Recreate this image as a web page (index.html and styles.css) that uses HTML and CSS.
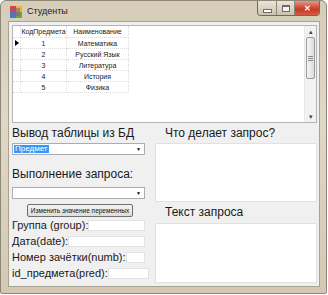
FILE: index.html
```html
<!DOCTYPE html>
<html>
<head>
    <meta charset="UTF-8">
    <title>Студенты</title>
    <link rel="stylesheet" href="styles.css">
</head>
<body>
    <div class="window">
        <div class="titlebar">
            <svg class="app-icon" width="14" height="14" viewBox="0 0 14 14">
                <rect x="1" y="1" width="6" height="6" fill="#d8452b"/>
                <rect x="7" y="1" width="6" height="6" fill="#f0b030"/>
                <rect x="1" y="7" width="6" height="6" fill="#3c7ed0"/>
                <rect x="7" y="7" width="6" height="6" fill="#6aa83a"/>
                <rect x="3" y="3" width="8" height="8" fill="#8a5a9a" opacity="0.6"/>
            </svg>
            <span class="title">Студенты</span>
            <div class="caption-buttons">
                <div class="cap-btn cap-min"><span class="min-glyph"></span></div>
                <div class="cap-btn cap-max"><span class="max-glyph"></span></div>
                <div class="cap-btn cap-close">✕</div>
            </div>
        </div>

        <div class="client">
            <div class="grid">
                <table class="grid-table">
                    <tr class="grid-head">
                        <td class="row-head"></td>
                        <td class="col-kod">КодПредмета</td>
                        <td class="col-name">Наименование</td>
                    </tr>
                    <tr>
                        <td class="row-head"><span class="row-arrow"></span></td>
                        <td>1</td>
                        <td>Математика</td>
                    </tr>
                    <tr>
                        <td class="row-head"></td>
                        <td>2</td>
                        <td>Русский Язык</td>
                    </tr>
                    <tr>
                        <td class="row-head"></td>
                        <td>3</td>
                        <td>Литература</td>
                    </tr>
                    <tr>
                        <td class="row-head"></td>
                        <td>4</td>
                        <td>История</td>
                    </tr>
                    <tr>
                        <td class="row-head"></td>
                        <td>5</td>
                        <td>Физика</td>
                    </tr>
                </table>
                <div class="vscroll">
                    <div class="scroll-arrow">▴</div>
                    <div class="scroll-thumb"><span class="grip"></span></div>
                    <div class="scroll-track"></div>
                    <div class="scroll-arrow">▾</div>
                </div>
            </div>

            <div class="lower">
                <div class="left">
                    <div class="label">Вывод таблицы из БД</div>
                    <div class="combo combo-first">
                        <span class="combo-sel">Предмет</span>
                        <span class="combo-arrow">▼</span>
                    </div>
                    <div class="label label-second">Выполнение запроса:</div>
                    <div class="combo combo-second">
                        <span class="combo-arrow">▼</span>
                    </div>
                    <div class="button">Изменить значение переменных</div>

                    <div class="field">
                        <span>Группа (group):</span>
                        <span class="input input-group"></span>
                    </div>
                    <div class="field">
                        <span>Дата(date):</span>
                        <span class="input input-date"></span>
                    </div>
                    <div class="field">
                        <span>Номер зачётки(numb):</span>
                        <span class="input input-numb"></span>
                    </div>
                    <div class="field">
                        <span>id_предмета(pred):</span>
                        <span class="input input-pred"></span>
                    </div>
                </div>

                <div class="right">
                    <div class="label label-right">Что делает запрос?</div>
                    <div class="memo memo-what"></div>
                    <div class="label label-right label-text">Текст запроса</div>
                    <div class="memo memo-text"></div>
                </div>
            </div>
        </div>
    </div>
</body>
</html>
```

FILE: styles.css
```css
body {
    margin: 0;
    background: #ffffff;
    font-family: "Liberation Sans", Arial, sans-serif;
}

.window {
    width: 327px;
    height: 294px;
    box-sizing: border-box;
    padding: 0 6px 6px 7px;
    border: 1px solid #8d8778;
    border-radius: 6px 6px 2px 2px;
    background: linear-gradient(180deg, #d6cdb8 0%, #e0d8c6 40%, #d3c9b3 100%);
}

.titlebar {
    height: 20px;
    display: flex;
    align-items: center;
}

.app-icon {
    margin-left: 1px;
    margin-top: 1px;
}

.title {
    margin-left: 4px;
    font-size: 9px;
    color: #1a1a1a;
}

.caption-buttons {
    margin-left: auto;
    align-self: flex-start;
    display: flex;
    height: 14px;
    border: 1px solid #6f6a5e;
    border-top: none;
    border-radius: 0 0 4px 4px;
    overflow: hidden;
}

.cap-btn {
    height: 14px;
    display: flex;
    align-items: center;
    justify-content: center;
    background: linear-gradient(180deg, #ebe5d8, #cbc2ad);
    border-right: 1px solid #8e8878;
}

.cap-min {
    width: 18px;
}

.cap-max {
    width: 17px;
}

.cap-close {
    width: 24px;
    border-right: none;
    background: linear-gradient(180deg, #e89683, #c83a26 60%, #d45a42);
    color: #ffffff;
    font-size: 8px;
    font-weight: bold;
}

.min-glyph {
    width: 7px;
    height: 2px;
    margin-top: 5px;
    background: #ffffff;
    border: 1px solid #6b6b6b;
}

.max-glyph {
    width: 6px;
    height: 4px;
    border: 1px solid #6b6b6b;
    border-top-width: 2px;
    background: #f4f4f4;
}

.client {
    height: 266px;
    background: #f0f0f0;
    border: 1px solid #a8a293;
    box-sizing: border-box;
    padding: 3px 0 0 3px;
}

/* таблица */
.grid {
    width: 305px;
    height: 98px;
    box-sizing: border-box;
    border: 1px solid #b4b4b4;
    background: #ffffff;
    display: flex;
}

.grid-table {
    border-collapse: collapse;
    font-size: 7px;
    color: #222;
    align-self: flex-start;
}

.grid-table td {
    height: 10px;
    padding: 0;
    text-align: center;
    border: 1px dotted #dcdcdc;
    white-space: nowrap;
}

.grid-head td {
    height: 11px;
    border-top: none;
}

.grid-table .row-head {
    width: 7px;
    border-left: none;
}

.col-kod {
    width: 45px;
}

.col-name {
    width: 61px;
}

.row-arrow {
    display: inline-block;
    width: 0;
    height: 0;
    border-top: 3px solid transparent;
    border-bottom: 3px solid transparent;
    border-left: 4px solid #000000;
}

.vscroll {
    margin-left: auto;
    width: 11px;
    display: flex;
    flex-direction: column;
    background: #f2f2f2;
    border-left: 1px solid #e8e8e8;
}

.scroll-arrow {
    height: 11px;
    font-size: 7px;
    line-height: 11px;
    text-align: center;
    color: #444;
}

.scroll-thumb {
    height: 40px;
    margin: 0 1px;
    border: 1px solid #9a9a9a;
    border-radius: 2px;
    background: linear-gradient(90deg, #f6f6f6, #dcdcdc);
    display: flex;
    align-items: center;
    justify-content: center;
}

.grip {
    width: 5px;
    height: 5px;
    background: repeating-linear-gradient(180deg, #8a8a8a 0 1px, transparent 1px 2px);
}

.scroll-track {
    flex: 1;
}

/* нижняя часть */
.lower {
    display: grid;
    grid-template-columns: 133px 162px;
    column-gap: 10px;
    margin-top: 3px;
}

.left,
.right {
    display: flex;
    flex-direction: column;
}

.label {
    font-size: 12px;
    line-height: 14px;
    color: #1a1a1a;
    white-space: nowrap;
}

.label-second {
    margin-top: 12px;
}

.label-right {
    padding-left: 10px;
}

.combo {
    height: 12px;
    box-sizing: border-box;
    border: 1px solid #abadb3;
    background: #ffffff;
    display: flex;
    align-items: center;
    padding-left: 1px;
}

.combo-first {
    margin-top: 3px;
}

.combo-second {
    margin-top: 6px;
}

.combo-sel {
    background: #3399ff;
    color: #ffffff;
    font-size: 8px;
    line-height: 8px;
    padding: 0 1px;
}

.combo-arrow {
    margin-left: auto;
    margin-right: 3px;
    font-size: 5px;
    color: #000;
}

.button {
    margin: 5px 0 0 15px;
    width: 106px;
    height: 13px;
    box-sizing: border-box;
    border: 1px solid #707070;
    border-radius: 2px;
    background: linear-gradient(180deg, #f2f2f2, #dddddd);
    font-size: 6.5px;
    line-height: 11px;
    text-align: center;
    white-space: nowrap;
    color: #111;
}

.field {
    height: 16px;
    display: flex;
    align-items: center;
    justify-content: space-between;
    font-size: 11px;
    color: #1a1a1a;
    white-space: nowrap;
}

.field:first-of-type {
    margin-top: 3px;
}

.input {
    flex-shrink: 0;
    height: 11px;
    margin-right: 1px;
    box-sizing: border-box;
    border: 1px solid #e2e2e2;
    background: #ffffff;
}

.input-group {
    width: 57px;
}

.input-date {
    width: 77px;
}

.input-numb {
    width: 19px;
}

.input-pred {
    width: 41px;
}

.memo {
    box-sizing: border-box;
    border: 1px solid #e2e2e2;
    background: #ffffff;
}

.memo-what {
    margin-top: 3px;
    height: 59px;
}

.label-text {
    margin-top: 3px;
}

.memo-text {
    margin-top: 4px;
    height: 60px;
}
```
